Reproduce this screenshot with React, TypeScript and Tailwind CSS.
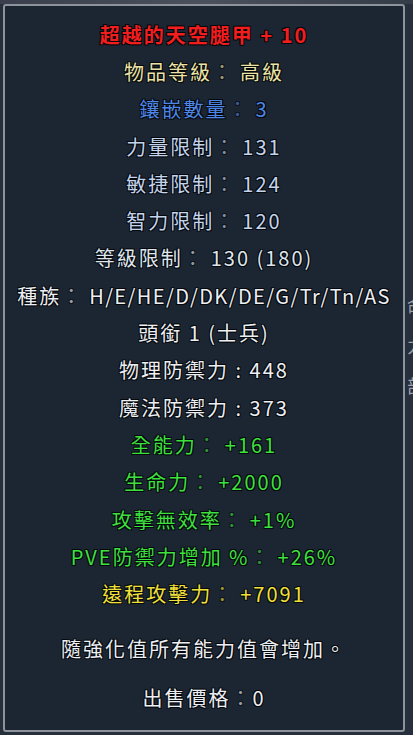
import type { ReactNode } from "react";

type Row = {
  key: string;
  color: string;
  content: ReactNode;
  extra?: string;
};

const outline =
  "[text-shadow:1px_1px_0_#05080c,-1px_-1px_0_#05080c,1px_-1px_0_#05080c,-1px_1px_0_#05080c]";

// dos puntos atenuados, con el hueco que deja el juego antes del valor
const Colon = () => <span className="mr-[6px] opacity-60">：</span>;

const rows: Row[] = [
  {
    key: "title",
    color: "text-[#f21d1d] font-bold",
    content: "超越的天空腿甲 + 10",
  },
  {
    key: "grade",
    color: "text-[#ebe3a6]",
    content: (
      <>
        物品等級<Colon />高級
      </>
    ),
  },
  {
    key: "socket",
    color: "text-[#4d86e6]",
    content: (
      <>
        鑲嵌數量<Colon />3
      </>
    ),
  },
  {
    key: "str",
    color: "text-[#c3d4ec]",
    content: (
      <>
        力量限制<Colon />131
      </>
    ),
  },
  {
    key: "dex",
    color: "text-[#c3d4ec]",
    content: (
      <>
        敏捷限制<Colon />124
      </>
    ),
  },
  {
    key: "int",
    color: "text-[#c3d4ec]",
    content: (
      <>
        智力限制<Colon />120
      </>
    ),
  },
  {
    key: "level",
    color: "text-[#dfe5ee]",
    content: (
      <>
        等級限制<Colon />130 (180)
      </>
    ),
  },
  {
    key: "race",
    color: "text-[#eceff3]",
    content: (
      <>
        種族<Colon />
        <span className="tracking-[1.4px]">H/E/HE/D/DK/DE/G/Tr/Tn/AS</span>
      </>
    ),
  },
  {
    key: "rank",
    color: "text-[#eceff3]",
    content: "頭銜 1 (士兵)",
  },
  {
    key: "pdef",
    color: "text-[#eceff3]",
    content: "物理防禦力 : 448",
  },
  {
    key: "mdef",
    color: "text-[#eceff3]",
    content: "魔法防禦力 : 373",
  },
  {
    key: "all",
    color: "text-[#3ee03e]",
    content: (
      <>
        全能力<Colon />+161
      </>
    ),
  },
  {
    key: "hp",
    color: "text-[#3ee03e]",
    content: (
      <>
        生命力<Colon />+2000
      </>
    ),
  },
  {
    key: "nullify",
    color: "text-[#3ee03e]",
    content: (
      <>
        攻擊無效率<Colon />+1%
      </>
    ),
  },
  {
    key: "pve",
    color: "text-[#3ee03e]",
    content: (
      <>
        PVE防禦力增加 %<Colon />+26%
      </>
    ),
  },
  {
    key: "ranged",
    color: "text-[#f0e03a]",
    content: (
      <>
        遠程攻擊力<Colon />+7091
      </>
    ),
  },
  {
    key: "note",
    color: "text-[#eceff3]",
    content: "隨強化值所有能力值會增加。",
    extra: "mt-[18px]",
  },
  {
    key: "price",
    color: "text-[#eceff3]",
    content: (
      <>
        出售價格 <span className="opacity-60">：</span>0
      </>
    ),
    extra: "mt-[11px]",
  },
];

export default function App() {
  return (
    <div className="flex h-[735px] w-[413px] flex-col overflow-hidden bg-[#262f3b] font-['Noto_Sans_CJK_TC','Noto_Sans',sans-serif]">
      {/* franja superior del fondo del juego */}
      <div className="h-[4px] shrink-0 bg-gradient-to-r from-[#3b3f4d] via-[#4a505c] to-[#343c48]" />

      <div className="flex flex-1">
        {/* tooltip */}
        <div className="ml-[3px] flex h-[728px] w-[402px] flex-col rounded-[3px] border-2 border-[#8d939b] bg-[#1c2632] pt-[10px]">
          {rows.map((row) => (
            <div
              key={row.key}
              className={`flex h-[37.3px] shrink-0 items-center justify-center whitespace-nowrap text-[20px] leading-none tracking-[2px] ${outline} ${row.color} ${row.extra ?? ""}`}
            >
              {row.content}
            </div>
          ))}
        </div>

        {/* resto del fondo a la derecha, tapado por el tooltip */}
        <div className="flex flex-1 flex-col items-start overflow-hidden pt-[292px] pl-[2px] text-[18px] leading-none text-[#cfd6df]/70">
          <span className="h-[40px]">命</span>
          <span className="h-[40px]">力</span>
          <span className="h-[40px]">部</span>
        </div>
      </div>
    </div>
  );
}
